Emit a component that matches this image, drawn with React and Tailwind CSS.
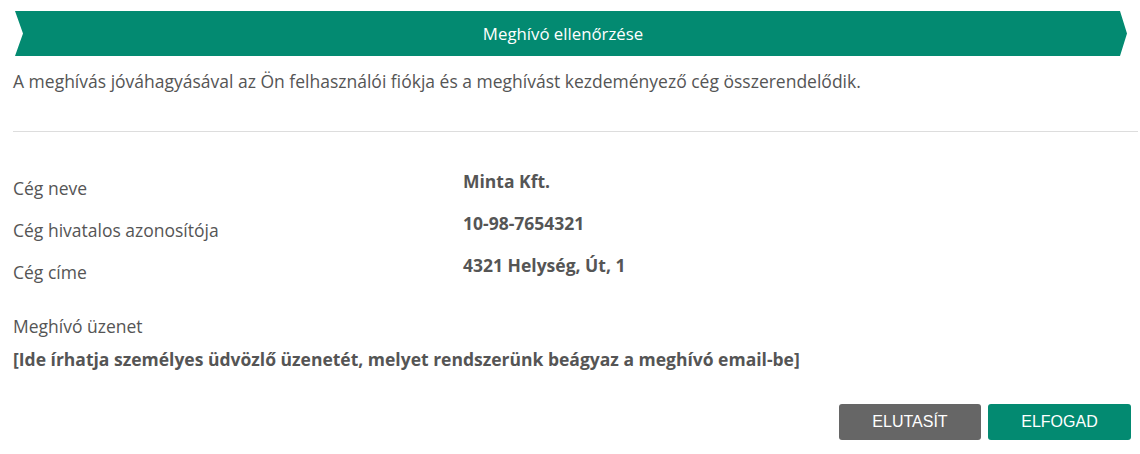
import React from 'react';

const rows = [
  { label: 'Cég neve', value: 'Minta Kft.' },
  { label: 'Cég hivatalos azonosítója', value: '10-98-7654321' },
  { label: 'Cég címe', value: '4321 Helység, Út, 1' },
];

export default function App() {
  return (
    <div className="w-[1140px] h-[454px] bg-white font-['Open_Sans',sans-serif] text-[#555] pt-[11px]">
      {/* Title ribbon */}
      <div className="ml-[15px] mr-[13px] h-[45px] pr-[16px] bg-[#038a71] flex items-center justify-center text-white text-[16.8px] [clip-path:polygon(0_0,calc(100%-7px)_0,100%_50%,calc(100%-7px)_100%,0_100%,8px_50%)]">
        Meghívó ellenőrzése
      </div>

      <div className="px-[13px] pr-[2px]">
        <p className="mt-[13px] text-[17.5px] leading-[24px]">
          A meghívás jóváhagyásával az Ön felhasználói fiókja és a meghívást kezdeményező cég összerendelődik.
        </p>

        <div className="mt-[38px] border-t border-[#dddddd]" />

        <div className="mt-[35px]">
          {rows.map((r) => (
            <div key={r.label} className="flex h-[42px]">
              <div className="w-[450px] pt-[7px] text-[17.5px] leading-[28px]">{r.label}</div>
              <div className="text-[17.5px] leading-[28px] font-bold">{r.value}</div>
            </div>
          ))}
        </div>

        <div className="mt-[21px] text-[17.5px] leading-[24px]">Meghívó üzenet</div>
        <div className="mt-[9px] text-[17.5px] leading-[24px] font-bold">
          [Ide írhatja személyes üdvözlő üzenetét, melyet rendszerünk beágyaz a meghívó email-be]
        </div>

        <div className="mt-[33px] flex justify-end gap-[7px] pr-[7px]">
          <button className="w-[142px] h-[36px] rounded-[3px] bg-[#666666] text-white font-['Liberation_Sans',Arial,sans-serif] text-[16px]">
            ELUTASÍT
          </button>
          <button className="w-[143px] h-[36px] rounded-[3px] bg-[#038a71] text-white font-['Liberation_Sans',Arial,sans-serif] text-[16px]">
            ELFOGAD
          </button>
        </div>
      </div>
    </div>
  );
}
